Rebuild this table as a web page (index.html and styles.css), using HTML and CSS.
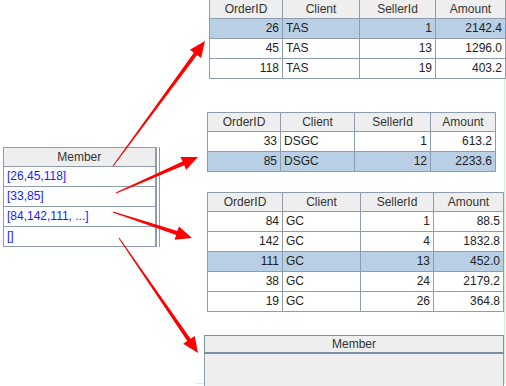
FILE: index.html
```html
<!DOCTYPE html>
<html>
<head>
<meta charset="utf-8">
<title>Group members</title>
<link rel="stylesheet" href="styles.css">
</head>
<body>
<div class="canvas">
  <div class="panel-frame"></div>

  <!-- source: grouped member lists -->
  <div class="node node-src">
    <table class="grid members">
      <colgroup><col class="c-member"></colgroup>
      <tr><th>Member</th></tr>
      <tr><td class="link">[26,45,118]</td></tr>
      <tr><td class="link">[33,85]</td></tr>
      <tr><td class="link">[84,142,111, ...]</td></tr>
      <tr><td class="link">[]</td></tr>
    </table>
  </div>

  <!-- group 1 -->
  <table class="grid node node-tas">
    <colgroup><col style="width:73px"><col style="width:77px"><col style="width:76px"><col style="width:70px"></colgroup>
    <tr><th>OrderID</th><th>Client</th><th>SellerId</th><th>Amount</th></tr>
    <tr class="sel"><td class="num">26</td><td>TAS</td><td class="num">1</td><td class="num">2142.4</td></tr>
    <tr><td class="num">45</td><td>TAS</td><td class="num">13</td><td class="num">1296.0</td></tr>
    <tr><td class="num">118</td><td>TAS</td><td class="num">19</td><td class="num">403.2</td></tr>
  </table>

  <!-- group 2 -->
  <table class="grid node node-dsgc">
    <colgroup><col style="width:73px"><col style="width:74px"><col style="width:76px"><col style="width:65px"></colgroup>
    <tr><th>OrderID</th><th>Client</th><th>SellerId</th><th>Amount</th></tr>
    <tr><td class="num">33</td><td>DSGC</td><td class="num">1</td><td class="num">613.2</td></tr>
    <tr class="sel"><td class="num">85</td><td>DSGC</td><td class="num">12</td><td class="num">2233.6</td></tr>
  </table>

  <!-- group 3 -->
  <table class="grid node node-gc">
    <colgroup><col style="width:75px"><col style="width:78px"><col style="width:73px"><col style="width:70px"></colgroup>
    <tr><th>OrderID</th><th>Client</th><th>SellerId</th><th>Amount</th></tr>
    <tr><td class="num">84</td><td>GC</td><td class="num">1</td><td class="num">88.5</td></tr>
    <tr><td class="num">142</td><td>GC</td><td class="num">4</td><td class="num">1832.8</td></tr>
    <tr class="sel"><td class="num">111</td><td>GC</td><td class="num">13</td><td class="num">452.0</td></tr>
    <tr><td class="num">38</td><td>GC</td><td class="num">24</td><td class="num">2179.2</td></tr>
    <tr><td class="num">19</td><td>GC</td><td class="num">26</td><td class="num">364.8</td></tr>
  </table>

  <!-- group 4: empty -->
  <div class="node node-empty">
    <div class="empty-head">Member</div>
    <div class="empty-body"></div>
  </div>

  <!-- connectors -->
  <svg class="arrows" width="506" height="386" viewBox="0 0 506 386">
    <polygon points="112.6,165.7 193.9,52.7 189.9,49.8 205,41 201.1,58 197.1,55.1 113.4,166.3"/>
    <polygon points="115.8,192.5 182.6,161.6 180.5,157 198,157 186.2,169.8 184.2,165.3 116.2,193.5"/>
    <polygon points="113.2,211.5 177.4,231.1 179,226.4 192,238 174.6,239.7 176.2,234.9 112.8,212.5"/>
    <polygon points="119.4,237.7 190.6,338.7 194.7,335.9 198,353 183.2,343.8 187.3,340.9 118.6,238.3"/>
  </svg>
</div>
</body>
</html>
```

FILE: styles.css
```css
html, body {
  margin: 0;
  padding: 0;
  background: #fff;
}

.canvas {
  position: relative;
  width: 506px;
  height: 386px;
  overflow: hidden;
  background: #fff;
  font-family: "Liberation Sans", Arial, sans-serif;
  font-size: 12px;
  color: #333;
}

/* faint outline of the result panel */
.panel-frame {
  position: absolute;
  left: 196px;
  top: -2px;
  width: 308px;
  height: 385px;
  border-right: 1px solid #d2f0d2;
  border-bottom: 1px solid #d2f0d2;
}

.node {
  position: absolute;
}

/* shared grid look */
.grid {
  border-collapse: collapse;
  table-layout: fixed;
  background: #fff;
}

.grid th,
.grid td {
  border: 1px solid #8e9cab;
  height: 19px;
  padding: 0 3px;
  white-space: nowrap;
  overflow: hidden;
  font-weight: normal;
  line-height: 17px;
}

.grid th {
  background: #eeeeee;
  text-align: center;
  color: #333;
  height: 18px;
}

.grid td {
  color: #222;
  text-align: left;
}

.grid td.num {
  text-align: right;
}

.grid tr.sel td {
  background: #b8cfe5;
}

/* member list on the left */
.node-src {
  left: 3px;
  top: 147px;
  padding-right: 2px;
  border-right: 1px solid #8e9cab;
}

.members {
  border-right: 2px solid #8e9cab;
}

.c-member {
  width: 152px;
}

.members td.link {
  color: #1a1aff;
}

.node-tas {
  left: 209px;
  top: -1px;
}

.node-dsgc {
  left: 207px;
  top: 112px;
}

.node-gc {
  left: 207px;
  top: 192px;
}

/* empty group: header only */
.node-empty {
  left: 204px;
  top: 335px;
  width: 298px;
  height: 60px;
  background: #eeeeee;
  border-left: 1px solid #8e9cab;
  border-right: 1px solid #8e9cab;
}

.empty-head {
  height: 16px;
  line-height: 16px;
  text-align: center;
  color: #333;
  border: 1px solid #7c8ea2;
  border-bottom-width: 2px;
  margin-right: -1px;
  margin-left: -1px;
}

.arrows {
  position: absolute;
  left: 0;
  top: 0;
  fill: #ff0000;
  pointer-events: none;
}
```
